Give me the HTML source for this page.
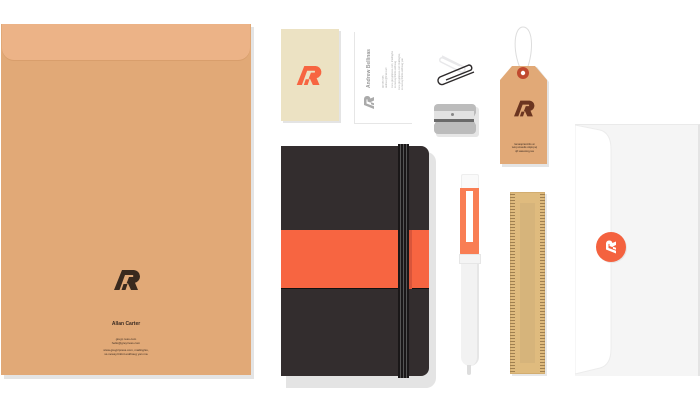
<!DOCTYPE html>
<html><head><meta charset="utf-8"><style>
body{margin:0;width:700px;height:400px;background:#fff;position:relative;overflow:hidden;font-family:"Liberation Sans",Arial,sans-serif}
div{position:absolute;box-sizing:border-box;font-family:"Liberation Sans",Arial,sans-serif}
.t{font-size:3px;color:#3a2b22;white-space:nowrap;text-align:center}
</style></head><body>
<svg width="0" height="0" style="position:absolute"><defs>
<symbol id="lg" viewBox="0 0 28 20"><path d="M0 20 L8 0 H20 A6.5 6.5 0 0 1 21 12.8 L24 20 H17 L14 13.5 H12.5 L15 7 H19 A2 2 0 0 0 19 5 H11 L5.5 20 Z M7.5 20 L9.5 14 H13.5 L11.5 20 Z"/></symbol>
</defs></svg>
<!-- big envelope -->
<div style="left:4px;top:27px;width:250px;height:352px;background:#e4e4e4"></div>
<div style="left:1px;top:24px;width:250px;height:351px;background:#e1a977"></div>
<div style="left:2px;top:24px;width:248px;height:36px;background:#ecb387;border-radius:0 0 12px 12px;box-shadow:0 1px 0 #d89e6c"></div>
<svg style="position:absolute;left:114px;top:270px" width="28" height="20" fill="#3a2a1e"><use href="#lg"/></svg>
<div class="t" style="left:76px;top:321px;width:100px;font-size:5px;font-weight:bold">Allan Carter</div>
<div class="t" style="left:76px;top:337px;width:100px">greyp ress.com<br>hello@greyrress.com</div>
<div class="t" style="left:76px;top:348px;width:100px">www.greyp/press.com, mailing/ss,<br>ss.newsy.ltnttnt eskhoug yan ma</div>
<!-- small card -->
<div style="left:283px;top:31px;width:58px;height:92px;background:#e4e4e4"></div>
<div style="left:281px;top:29px;width:58px;height:92px;background:#ece2c3"></div>
<svg style="position:absolute;left:296px;top:66px" width="28" height="19" fill="#f76541"><use href="#lg"/></svg>
<!-- business card -->
<div style="left:355px;top:31px;width:58px;height:92px;background:#fff;box-shadow:-1px 1px 0 #e6e6e6"></div>
<div style="top:88px;left:366px;font-size:5px;color:#999;transform:rotate(-90deg);transform-origin:left top;font-weight:bold;white-space:nowrap">Andrew Bellinas</div>
<div style="left:382px;top:88px;font-size:2.5px;color:#aaa;transform:rotate(-90deg);transform-origin:left top;line-height:3px;white-space:nowrap">08 555 555<br>andrew@mail.com<br><br>www.greyp/press.com, mailing/ss<br>ss.newsy.ltnttnt eskhoug</div>
<div style="left:398px;top:90px;font-size:2.5px;color:#aaa;transform:rotate(-90deg);transform-origin:left top;line-height:3px;white-space:nowrap">www.greyp/press.com mailing/ss,<br>ss.newsy.ltnttnt eskhoug yan</div>
<svg style="position:absolute;left:362px;top:97px;transform:rotate(-90deg)" width="14" height="10" fill="#aaa"><use href="#lg"/></svg>
<!-- paperclip -->
<svg style="position:absolute;left:434px;top:48px" width="46" height="40">
<path d="M8 8 L30 19 A3 3 0 0 1 27 24 L7 14 A2 2 0 0 1 9 10 L26 18" fill="none" stroke="#e8e8ea" stroke-width="1.5"/>
<path d="M40 24 L10 36 A4 4 0 0 1 6 29 L35 17 A3 3 0 0 1 37 22 L12 32" fill="none" stroke="#2d2a2b" stroke-width="1.4"/>
</svg>
<!-- sharpener -->
<div style="left:436px;top:107px;width:43px;height:30px;background:#e6e6e6;border-radius:3px"></div>
<div style="left:434px;top:104px;width:42px;height:30px;background:#bcbcbc;border-radius:4px;clip-path:polygon(0 0,100% 0,100% 30%,92% 50%,100% 70%,100% 100%,0 100%,0 70%,8% 50%,0 30%)"></div>
<div style="left:434px;top:111px;width:40px;height:11px;background:#e2e2e2;border-bottom:3px solid #6a6a6a"></div>
<div style="left:451px;top:113px;width:3px;height:3px;background:#888;border-radius:50%"></div>
<!-- tag -->
<svg style="position:absolute;left:498px;top:25px" width="56" height="142">
<path d="M25 49 C14 30 15 2 25 2 C36 2 36 30 27 49" fill="none" stroke="#ddd" stroke-width="1"/>
<path d="M4 143 V57 L16 42 H39 L51 57 V143Z" fill="#e4e4e4"/>
<path d="M2 139 V55 L14 41 H37 L49 55 V139Z" fill="#e1a977"/>
<circle cx="25" cy="48" r="6" fill="#c04a2f"/><circle cx="25" cy="48" r="2.2" fill="#fff"/>
</svg>
<svg style="position:absolute;left:514px;top:100px" width="22" height="17" fill="#6b3520"><use href="#lg"/></svg>
<div class="t" style="left:500px;top:143px;width:49px;font-size:2.6px;line-height:3.4px">lamaqorannitto at<br>woq unsaufe olqoq sq<br>qfi sasuwsq,pua</div>
<!-- notebook -->
<div style="left:286px;top:152px;width:150px;height:236px;background:#e4e4e4;border-radius:0 10px 10px 0"></div>
<div style="left:281px;top:146px;width:148px;height:230px;background:#332d2e;border-radius:0 8px 8px 0"></div>
<div style="left:281px;top:230px;width:148px;height:59px;background:#f76541;border-bottom:1px solid #111"></div>
<div style="left:408px;top:230px;width:4px;height:59px;background:#d9553a"></div>
<div style="left:398px;top:144px;width:11px;height:234px;background:repeating-linear-gradient(90deg,#1a1718 0 2px,#555 2px 3px)"></div>
<!-- pen -->
<div style="left:461px;top:174px;width:18px;height:16px;background:#fafafa;border:1px solid #eee;border-radius:2px 2px 0 0"></div>
<div style="left:460px;top:188px;width:19px;height:67px;background:#f97e54;border-radius:0 0 2px 2px"></div>
<div style="left:466px;top:191px;width:7px;height:51px;background:#fff"></div>
<div style="left:459px;top:254px;width:22px;height:10px;background:#f4f4f4;border:1px solid #e6e6e6"></div>
<div style="left:461px;top:264px;width:18px;height:102px;background:#f2f2f2;border-radius:0 0 9px 9px;border-right:2px solid #e6e6e6"></div>
<div style="left:467px;top:365px;width:4px;height:10px;background:#ddd;border-radius:0 0 2px 2px"></div>
<!-- ruler -->
<div style="left:512px;top:194px;width:35px;height:182px;background:#e7e7e7"></div>
<div style="left:510px;top:192px;width:35px;height:182px;background:#dfbb7e;border:1px solid #d2ad70"></div>
<div style="left:520px;top:203px;width:15px;height:160px;background:#d6b47b"></div>
<div style="left:510px;top:194px;width:5px;height:178px;background:repeating-linear-gradient(#a08050 0 1px,transparent 1px 3px)"></div>
<div style="left:540px;top:194px;width:5px;height:178px;background:repeating-linear-gradient(#a08050 0 1px,transparent 1px 3px)"></div>
<!-- white envelope -->
<div style="left:575px;top:124px;width:125px;height:252px;background:#f5f5f5;border-top:1px solid #eaeaea;border-right:2px solid #e4e4e4"></div>
<svg style="position:absolute;left:575px;top:124px" width="40" height="253"><path d="M0 1 L25 6 Q36 9 36 25 V225 Q36 241 25 244 L0 250Z" fill="#fff" stroke="#ececec"/></svg>
<div style="left:596px;top:232px;width:30px;height:30px;border-radius:50%;background:#f4623f;box-shadow:1px 1px 0 #e5e5e5"></div>
<svg style="position:absolute;left:604px;top:241px;transform:rotate(-90deg)" width="14" height="11" fill="#fff"><use href="#lg"/></svg>
</body></html>
